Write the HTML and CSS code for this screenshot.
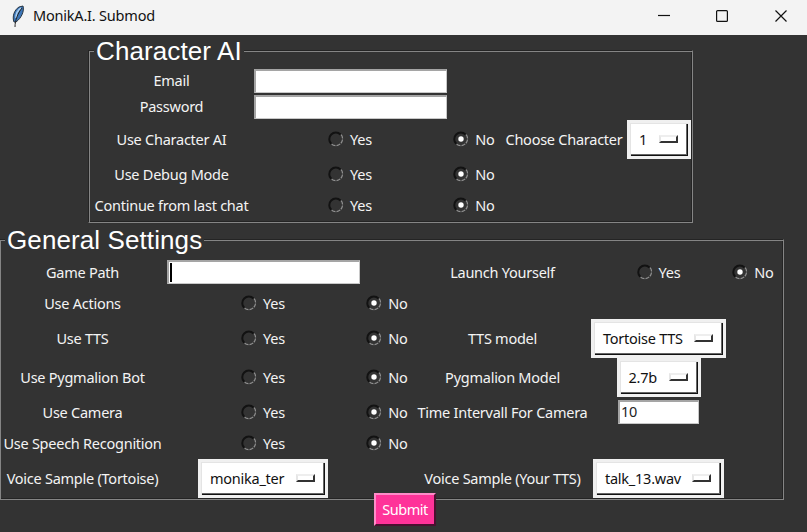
FILE: index.html
```html
<!DOCTYPE html>
<html lang="en">
<head>
<meta charset="utf-8">
<title>MonikA.I. Submod</title>
<link rel="stylesheet" href="styles.css">
</head>
<body>
<svg width="0" height="0" class="defs">
  <symbol id="off" viewBox="0 0 16 16">
    <path d="M3.200 12.800A6.500 6.500 0 1 1 12.500 3.500" fill="none" stroke="#121212" stroke-width="2"/>
    <path d="M13.200 3.700A6.800 6.800 0 0 1 3.400 13" fill="none" stroke="#929292" stroke-width="1.2" stroke-dasharray="4 1"/>
  </symbol>
  <symbol id="on" viewBox="0 0 16 16">
    <use href="#off"/>
    <circle cx="8" cy="8" r="2.700" fill="#fff"/>
  </symbol>
</svg>
<header class="titlebar">
  <svg class="feather" width="14" height="22" viewBox="0 0 14 22">
    <path d="M3 17C1 12 3 5 8 2L12 1C13.500 6 10.500 13 5 17Z" fill="#3d76b8" stroke="#273542" stroke-width="1"/>
    <path d="M5 13C5 8 7 5 10 3" fill="none" stroke="#a8cdef" stroke-width="1.6"/>
    <path d="M4 22C4 15 7 8 11 3" fill="none" stroke="#262626" stroke-width="1"/>
  </svg>
  <h1 class="title">MonikA.I. Submod</h1>
  <svg class="controls" width="130" height="14" viewBox="0 0 130 14" fill="none" stroke="#111" stroke-width="1.2">
    <path d="M0 6.500H12"/>
    <rect x="58.600" y="1.600" width="10.800" height="10.800" rx="1"/>
    <path d="M117.500 1.500L128.500 12.500M128.500 1.500L117.500 12.500"/>
  </svg>
</header>
<main>
  <section class="frame character">
    <h2 class="legend">Character AI</h2>
    <div class="grid">
      <label>Email</label><input class="entry" type="text"><i></i><i></i><i></i>
      <label>Password</label><input class="entry" type="text"><i></i><i></i><i></i>
      <label>Use Character AI</label><span class="radio"><svg><use href="#off"/></svg>Yes</span><span class="radio"><svg><use href="#on"/></svg>No</span><label>Choose Character</label><button class="option one">1<b></b></button>
      <label>Use Debug Mode</label><span class="radio"><svg><use href="#off"/></svg>Yes</span><span class="radio"><svg><use href="#on"/></svg>No</span><i></i><i></i>
      <label>Continue from last chat</label><span class="radio"><svg><use href="#off"/></svg>Yes</span><span class="radio"><svg><use href="#on"/></svg>No</span><i></i><i></i>
    </div>
  </section>
  <section class="frame general">
    <h2 class="legend">General Settings</h2>
    <div class="grid">
      <label>Game Path</label><span class="entry focused"><s></s></span><i></i><label>Launch Yourself</label><span class="radio"><svg><use href="#off"/></svg>Yes</span><span class="radio"><svg><use href="#on"/></svg>No</span>
      <label>Use Actions</label><span class="radio"><svg><use href="#off"/></svg>Yes</span><span class="radio"><svg><use href="#on"/></svg>No</span><i></i><i></i><i></i>
      <label>Use TTS</label><span class="radio"><svg><use href="#off"/></svg>Yes</span><span class="radio"><svg><use href="#on"/></svg>No</span><label>TTS model</label><button class="option tts">Tortoise TTS<b></b></button><i></i>
      <label>Use Pygmalion Bot</label><span class="radio"><svg><use href="#off"/></svg>Yes</span><span class="radio"><svg><use href="#on"/></svg>No</span><label>Pygmalion Model</label><button class="option pyg">2.7b<b></b></button><i></i>
      <label>Use Camera</label><span class="radio"><svg><use href="#off"/></svg>Yes</span><span class="radio"><svg><use href="#on"/></svg>No</span><label>Time Intervall For Camera</label><input class="entry short" type="text" value="10"><i></i>
      <label>Use Speech Recognition</label><span class="radio"><svg><use href="#off"/></svg>Yes</span><span class="radio"><svg><use href="#on"/></svg>No</span><i></i><i></i><i></i>
      <label>Voice Sample (Tortoise)</label><button class="option monika">monika_ter<b></b></button><i></i><label>Voice Sample (Your TTS)</label><button class="option talk">talk_13.wav<b></b></button><i></i>
    </div>
  </section>
  <button class="submit">Submit</button>
</main>
</body>
</html>
```
FILE: styles.css
```css
* { box-sizing: border-box; }
body {
  margin: 0;
  width: 807px;
  height: 532px;
  overflow: hidden;
  background: #333;
  color: #f4f4f4;
  font: 14.5px/20px "Noto Sans", sans-serif;
  letter-spacing: -0.25px;
}
.defs { display: block; }
.titlebar {
  height: 35px;
  background: #f3f3f3;
  color: #111;
  display: flex;
  align-items: center;
  padding: 0 19px 4px 11px;
}
.title { margin: -1px auto 0 8px; font: inherit; letter-spacing: -0.2px; }
.frame {
  border: 1px solid;
  border-color: #242424 #858585 #858585 #242424;
  box-shadow: inset 1px 1px #858585, inset -1px -1px #242424;
}
.legend {
  width: max-content;
  margin: -15px 0 0 5px;
  padding: 0 2px;
  height: 30px;
  background: #333;
  color: #fff;
  font: 26px/30px "Liberation Sans", Arial, sans-serif;
  letter-spacing: 0.1px;
}
.grid {
  display: grid;
  align-items: center;
  justify-items: center;
  white-space: nowrap;
}
.grid label { padding-bottom: 2px; }
.character { width: 605px; height: 173px; margin: 15px 0 0 88px; }
.character .grid {
  margin: 2px 0 0 1px;
  grid-template-columns: 163px 194px 54px 126px 64px;
  grid-template-rows: 26px 26px 39px 31px 31px;
}
.general { width: 785px; height: 261px; margin: 16px 0 0 -1px; }
.general .grid {
  margin: 2px 0 0 0;
  grid-template-columns: 165px 196px 52px 179px 133px 56px;
  grid-template-rows: 31px 31px 39px 39px 31px 31px 39px;
}
.radio { display: flex; align-items: center; gap: 6px; padding-bottom: 2px; }
.radio svg { width: 16px; height: 16px; }
.entry {
  width: 193px;
  height: 24px;
  border: 1px solid #c8c8c8;
  border-top: 2px solid #a5a5a5;
  border-left: 2px solid #a5a5a5;
  background: #fff;
  color: #222;
  font: inherit;
  letter-spacing: inherit;
  padding: 0 1px 2px;
}
.general .entry { margin-bottom: 2px; }
.focused { display: block; }
.focused s { display: block; width: 2px; height: 19px; margin-top: 1px; background: #000; }
.short { width: 81px; }
.option {
  height: 39px;
  border: 3px solid #f0f0f0;
  padding: 0 10px 2px 9px;
  background: #fff;
  color: #111;
  font: inherit;
  letter-spacing: inherit;
  display: flex;
  align-items: center;
  justify-content: space-between;
  box-shadow: inset 1px 1px #e4e4e4, inset -1px -1px #111, inset -2px -2px #666;
}
.option b {
  width: 19px;
  height: 8px;
  border: 2px solid;
  border-color: #eee #333 #333 #e6e6e6;
}
.one { width: 64px; }
.tts { width: 135px; }
.pyg { width: 84px; }
.monika { width: 130px; }
.talk { width: 131px; }
.submit {
  display: block;
  width: 62px;
  height: 33px;
  margin: -7px 0 0 374px;
  position: relative;
  padding: 0 0 2px;
  border: 2px solid;
  border-color: #ff8cc8 #4b1030 #4b1030 #ff8cc8;
  background: #ff3399;
  color: #fff;
  font: inherit;
  letter-spacing: -0.45px;
}
```
